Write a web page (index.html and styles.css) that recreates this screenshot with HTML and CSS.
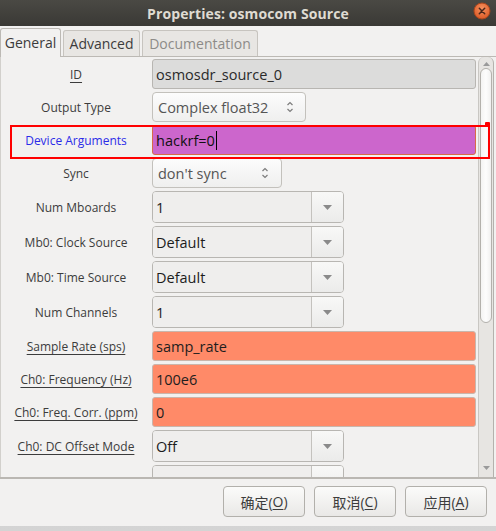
FILE: index.html
```html
<!DOCTYPE html>
<html>
<head>
<meta charset="utf-8">
<link rel="stylesheet" href="styles.css">
</head>
<body>
<div class="window">
  <div class="titlebar">
    <span></span>
    <span class="title">Properties: osmocom Source</span>
    <span class="close">
      <svg width="18" height="18" viewBox="0 0 18 18">
        <defs>
          <radialGradient id="cg" cx="50%" cy="35%" r="65%">
            <stop offset="0" stop-color="#f6915f"/>
            <stop offset="1" stop-color="#dc5a26"/>
          </radialGradient>
        </defs>
        <circle cx="9" cy="9" r="8" fill="url(#cg)" stroke="#a9461d" stroke-width="1"/>
        <path d="M6.3 6.3 L11.7 11.7 M11.7 6.3 L6.3 11.7" stroke="#4a261a" stroke-width="1.5" stroke-linecap="round"/>
      </svg>
    </span>
  </div>

  <div class="tabs">
    <div class="tab active tab-general">General</div>
    <div class="tab tab-advanced">Advanced</div>
    <div class="tab disabled tab-doc">Documentation</div>
  </div>

  <div class="page">
    <div class="viewport">
      <div class="form">
        <div class="label u">ID</div>
        <div class="entry disabled">osmosdr_source_0</div>

        <div class="label">Output Type</div>
        <div class="spin w-output"><span>Complex float32</span>
          <svg width="8" height="14" viewBox="0 0 8 14"><path d="M1.5 5 L4 2.5 L6.5 5 M1.5 9 L4 11.5 L6.5 9" fill="none" stroke="#7c7c7c" stroke-width="1.2"/></svg>
        </div>

        <div class="label blue">Device Arguments</div>
        <div class="entry string">hackrf=0<span class="caret"></span></div>

        <div class="label">Sync</div>
        <div class="spin w-sync"><span>don't sync</span>
          <svg width="8" height="14" viewBox="0 0 8 14"><path d="M1.5 5 L4 2.5 L6.5 5 M1.5 9 L4 11.5 L6.5 9" fill="none" stroke="#7c7c7c" stroke-width="1.2"/></svg>
        </div>

        <div class="label">Num Mboards</div>
        <div class="combo"><div class="combo-entry">1</div><div class="combo-btn"><svg width="9" height="5" viewBox="0 0 9 5"><polygon points="0,0 9,0 4.5,5" fill="#8a8a8a"/></svg></div></div>

        <div class="label">Mb0: Clock Source</div>
        <div class="combo"><div class="combo-entry">Default</div><div class="combo-btn"><svg width="9" height="5" viewBox="0 0 9 5"><polygon points="0,0 9,0 4.5,5" fill="#8a8a8a"/></svg></div></div>

        <div class="label">Mb0: Time Source</div>
        <div class="combo"><div class="combo-entry">Default</div><div class="combo-btn"><svg width="9" height="5" viewBox="0 0 9 5"><polygon points="0,0 9,0 4.5,5" fill="#8a8a8a"/></svg></div></div>

        <div class="label">Num Channels</div>
        <div class="combo"><div class="combo-entry">1</div><div class="combo-btn"><svg width="9" height="5" viewBox="0 0 9 5"><polygon points="0,0 9,0 4.5,5" fill="#8a8a8a"/></svg></div></div>

        <div class="label u">Sample Rate (sps)</div>
        <div class="entry real">samp_rate</div>

        <div class="label u">Ch0: Frequency (Hz)</div>
        <div class="entry real">100e6</div>

        <div class="label u">Ch0: Freq. Corr. (ppm)</div>
        <div class="entry real">0</div>

        <div class="label u">Ch0: DC Offset Mode</div>
        <div class="combo"><div class="combo-entry">Off</div><div class="combo-btn"><svg width="9" height="5" viewBox="0 0 9 5"><polygon points="0,0 9,0 4.5,5" fill="#8a8a8a"/></svg></div></div>

        <div class="label"></div>
        <div class="combo"><div class="combo-entry"></div><div class="combo-btn"></div></div>
      </div>
    </div>
    <div class="scrollbar">
      <div class="sb-arrow"><svg width="7" height="4" viewBox="0 0 7 4"><polygon points="0,4 7,4 3.5,0" fill="#9a9a9a"/></svg></div>
      <div class="thumb"></div>
      <div class="sb-space"></div>
      <div class="sb-arrow down"><svg width="7" height="4" viewBox="0 0 7 4"><polygon points="0,0 7,0 3.5,4" fill="#9a9a9a"/></svg></div>
    </div>
  </div>

  <div class="actions">
    <button class="btn">确定(<u>O</u>)</button>
    <button class="btn">取消(<u>C</u>)</button>
    <button class="btn">应用(<u>A</u>)</button>
  </div>
</div>

<div class="highlight"></div>
<div class="highlight-mark"></div>
</body>
</html>
```

FILE: styles.css
```css
* { box-sizing: border-box; }
html, body { margin: 0; padding: 0; }
body {
  width: 496px;
  height: 531px;
  overflow: hidden;
  position: relative;
  background: linear-gradient(#a8a8a8, #d4d4d4);
  font-family: "Open Sans", "Noto Sans CJK SC", sans-serif;
  color: #3c3c3c;
}

.window {
  height: 526px;
  background: #f2f1f0;
  display: flex;
  flex-direction: column;
}

/* title bar */
.titlebar {
  height: 26px;
  flex: none;
  background: linear-gradient(#4a4944, #3a3935);
  display: grid;
  grid-template-columns: 1fr auto 1fr;
  align-items: center;
}
.title {
  color: #dfdbd2;
  font-weight: 700;
  font-size: 14px;
  letter-spacing: 0.1px;
}
.close {
  justify-self: end;
  margin-right: 5px;
  margin-top: -4px;
  display: flex;
}

/* tabs */
.tabs {
  height: 31px;
  flex: none;
  display: flex;
  align-items: flex-end;
  gap: 2px;
  border-bottom: 1px solid #bcb9b4;
}
.tab {
  height: 26px;
  border: 1px solid #c7c4bf;
  border-bottom: 0;
  border-radius: 3px 3px 0 0;
  background: #e8e6e3;
  font-size: 14px;
  color: #3c3c3c;
  display: flex;
  align-items: center;
  justify-content: center;
  padding-bottom: 1px;
}
.tab.active {
  height: 29px;
  margin-bottom: -1px;
  background: #f2f1f0;
  border-color: #bcb9b4;
  padding-bottom: 2px;
}
.tab.disabled { color: #8d8b88; }
.tab-general { width: 61px; }
.tab-advanced { width: 77px; }
.tab-doc { width: 116px; }

/* page */
.page {
  height: 422px;
  flex: none;
  display: flex;
  border-bottom: 2px solid #bab7b2;
  padding-right: 2px;
}
.viewport {
  width: 478px;
  overflow: hidden;
  border-left: 1px solid #d2d0cc;
}
.form {
  display: grid;
  grid-template-columns: 150px auto;
  column-gap: 1px;
  row-gap: 3px;
  padding-top: 2px;
  justify-content: start;
  align-items: center;
}
.label {
  font-size: 12px;
  color: #3c3c3c;
  text-align: center;
}
.label.u {
  text-decoration: underline;
  text-underline-offset: 3px;
}
.label.blue { color: #2c2ce8; }

.entry {
  width: 324px;
  height: 30px;
  border: 1px solid #b8b6b2;
  border-radius: 3px;
  padding-left: 3px;
  font-size: 14.5px;
  color: #222;
  display: flex;
  align-items: center;
  background: #fff;
}
.entry.disabled { background: #dcdcdb; color: #2a2a2a; }
.entry.string { background: #cc66cc; border-color: #d86a48; color: #111; }
.entry.real { background: #ff8a68; border-color: #c9b6ac; color: #1e1e1e; }
.caret {
  display: inline-block;
  width: 1px;
  height: 19px;
  background: #000;
  margin-left: 1px;
}

.spin {
  height: 30px;
  border: 1px solid #c3c1bc;
  border-radius: 4px;
  background: linear-gradient(#fcfcfc, #efefee);
  display: flex;
  align-items: center;
  justify-content: space-between;
  padding: 0 11px 0 5px;
  font-size: 14.5px;
  color: #555;
}
.w-output { width: 154px; }
.w-sync { width: 130px; padding-right: 12px; }

.combo {
  width: 192px;
  height: 32px;
  display: flex;
  border: 1px solid #b8b6b2;
  border-radius: 4px;
  overflow: hidden;
}
.combo-entry {
  width: 159px;
  background: #efeeed;
  border-right: 1px solid #c4c2be;
  display: flex;
  align-items: center;
  padding-left: 3px;
  font-size: 14.5px;
  color: #1c1c1c;
}
.combo-btn {
  flex: 1;
  background: linear-gradient(#f8f8f7, #ebebea);
  display: flex;
  align-items: center;
  justify-content: center;
}

/* scrollbar */
.scrollbar {
  width: 16px;
  display: flex;
  flex-direction: column;
  align-items: center;
  background: #e7e5e2;
  border-left: 1px solid #c9c7c3;
  border-right: 1px solid #b4b2ad;
  border-radius: 6px 6px 0 0;
}
.sb-arrow {
  height: 11px;
  flex: none;
  display: flex;
  align-items: center;
  justify-content: center;
  padding-top: 2px;
}
.sb-arrow.down { height: 14px; padding-top: 0; padding-bottom: 4px; }
.thumb {
  width: 12px;
  height: 255px;
  flex: none;
  border: 1px solid #b3b1ac;
  border-radius: 6px;
  background: linear-gradient(90deg, #f4f4f3, #fdfdfd 50%, #f0f0ef);
}
.sb-space { flex: 1; }

/* actions */
.actions {
  flex: 1;
  display: flex;
  justify-content: flex-end;
  align-items: flex-start;
  gap: 9px;
  padding: 7px 9px 0 0;
}
.btn {
  width: 82px;
  height: 31px;
  border: 1px solid #b2b0ab;
  border-radius: 4px;
  background: linear-gradient(#fbfbfa, #e9e8e6);
  font-family: "Open Sans", "Noto Sans CJK SC", sans-serif;
  font-size: 14px;
  color: #3c3c3c;
  padding: 0;
  display: flex;
  align-items: center;
  justify-content: center;
}
.btn u { text-underline-offset: 2px; }

/* annotation overlay */
.highlight {
  position: absolute;
  left: 10px;
  top: 125px;
  width: 480px;
  height: 34px;
  border: 2px solid #ff0000;
}
.highlight-mark {
  position: absolute;
  left: 485px;
  top: 122px;
  width: 5px;
  height: 5px;
  background: #ff0000;
  border-radius: 1px;
}
```
